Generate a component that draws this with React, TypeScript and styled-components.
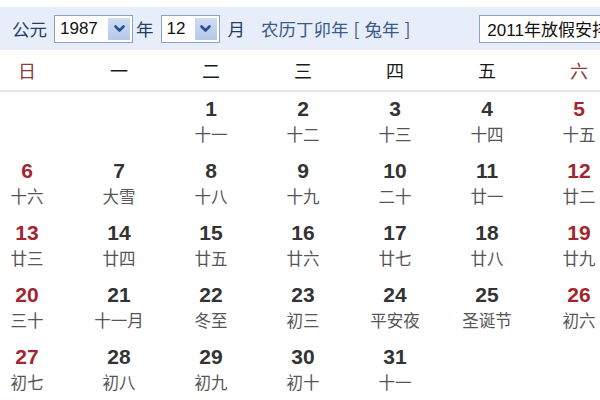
import React from "react";
import styled, { createGlobalStyle } from "styled-components";

const Global = createGlobalStyle`
  html, body { margin: 0; padding: 0; background: #fff; }
  body { width: 600px; height: 400px; overflow: hidden; font-family: "Liberation Sans", Arial, "Noto Sans CJK SC", sans-serif; }
`;

const Page = styled.div`
  width: 600px;
  height: 400px;
  overflow: hidden;
  padding-top: 7px;
  box-sizing: border-box;
  background: #fff;
`;

const Toolbar = styled.div`
  height: 43px;
  background: #e7eef9;
  display: flex;
  align-items: center;
  padding-left: 12px;
  white-space: nowrap;
  overflow: hidden;
`;

const Label = styled.span<{ $ml?: number; $color?: string }>`
  font-family: "Noto Sans CJK SC", sans-serif;
  font-size: 17.5px;
  color: ${(p) => p.$color || "#233d63"};
  margin-left: ${(p) => p.$ml ?? 0}px;
  line-height: 1;
  flex-shrink: 0;
`;

const Bracket = styled.span`
  margin: 0 5px;
`;

const Select = styled.div<{ $w: number; $ml: number }>`
  width: ${(p) => p.$w}px;
  height: 28px;
  margin-left: ${(p) => p.$ml}px;
  box-sizing: border-box;
  border: 1px solid #8aa3c4;
  background: #fff;
  display: flex;
  align-items: center;
  padding: 2px;
  flex-shrink: 0;
`;

const SelectText = styled.span`
  flex: 1;
  font-family: "Liberation Sans", Arial, sans-serif;
  font-size: 17px;
  color: #111;
  padding-left: 3px;
`;

const WideSelectText = styled.span`
  font-family: "Liberation Sans", "Noto Sans CJK SC", sans-serif;
  font-size: 17px;
  color: #111;
  padding-left: 5px;
`;

const Arrow = styled.div`
  width: 22px;
  height: 100%;
  background: linear-gradient(#cfddf3, #b4c8ea);
  display: flex;
  align-items: center;
  justify-content: center;
`;

const Chevron = () => (
  <svg width="11" height="8" viewBox="0 0 11 8">
    <path d="M1.5 1.5 L5.5 5.5 L9.5 1.5" stroke="#2e4f8f" strokeWidth="2.6" fill="none" strokeLinecap="round" strokeLinejoin="round" />
  </svg>
);

const Grid = styled.div`
  display: grid;
  grid-template-columns: repeat(7, 92px);
  margin-left: -19px;
  width: 644px;
`;

const HeaderRow = styled(Grid)`
  height: 40px;
  border-bottom: 2px solid #e4e6ea;
  align-items: center;
`;

const WeekDay = styled.div<{ $weekend?: boolean }>`
  text-align: center;
  font-family: "Noto Sans CJK SC", sans-serif;
  font-size: 18px;
  color: ${(p) => (p.$weekend ? "#8e3a36" : "#1a1a1a")};
`;

const Cell = styled.div`
  height: 62px;
  display: flex;
  flex-direction: column;
  align-items: center;
  padding-top: 5px;
  box-sizing: border-box;
`;

const DayNum = styled.div<{ $weekend?: boolean }>`
  font-family: "Liberation Sans", Arial, sans-serif;
  font-weight: bold;
  font-size: 21px;
  line-height: 24px;
  color: ${(p) => (p.$weekend ? "#a3262e" : "#333")};
`;

const Lunar = styled.div`
  font-family: "Noto Sans CJK SC", sans-serif;
  font-size: 16.5px;
  line-height: 24px;
  color: #555;
  margin-top: 1px;
`;

const weekDays = ["日", "一", "二", "三", "四", "五", "六"];

const days: ([number, string] | null)[] = [
  null, null,
  [1, "十一"], [2, "十二"], [3, "十三"], [4, "十四"], [5, "十五"],
  [6, "十六"], [7, "大雪"], [8, "十八"], [9, "十九"], [10, "二十"], [11, "廿一"], [12, "廿二"],
  [13, "廿三"], [14, "廿四"], [15, "廿五"], [16, "廿六"], [17, "廿七"], [18, "廿八"], [19, "廿九"],
  [20, "三十"], [21, "十一月"], [22, "冬至"], [23, "初三"], [24, "平安夜"], [25, "圣诞节"], [26, "初六"],
  [27, "初七"], [28, "初八"], [29, "初九"], [30, "初十"], [31, "十一"],
];

export default function App() {
  return (
    <Page>
      <Global />
      <Toolbar>
        <Label>公元</Label>
        <Select $w={79} $ml={7}>
          <SelectText>1987</SelectText>
          <Arrow><Chevron /></Arrow>
        </Select>
        <Label $ml={3}>年</Label>
        <Select $w={59} $ml={7}>
          <SelectText>12</SelectText>
          <Arrow><Chevron /></Arrow>
        </Select>
        <Label $ml={8}>月</Label>
        <Label $ml={16} $color="#3b5a88">
          农历丁卯年<Bracket>[</Bracket>兔年<Bracket>]</Bracket>
        </Label>
        <Select $w={160} $ml={64}>
          <WideSelectText>2011年放假安排</WideSelectText>
        </Select>
      </Toolbar>
      <HeaderRow>
        {weekDays.map((d, i) => (
          <WeekDay key={d} $weekend={i === 0 || i === 6}>{d}</WeekDay>
        ))}
      </HeaderRow>
      <Grid>
        {days.map((d, i) => (
          <Cell key={i}>
            {d && (
              <>
                <DayNum $weekend={i % 7 === 0 || i % 7 === 6}>{d[0]}</DayNum>
                <Lunar>{d[1]}</Lunar>
              </>
            )}
          </Cell>
        ))}
      </Grid>
    </Page>
  );
}
